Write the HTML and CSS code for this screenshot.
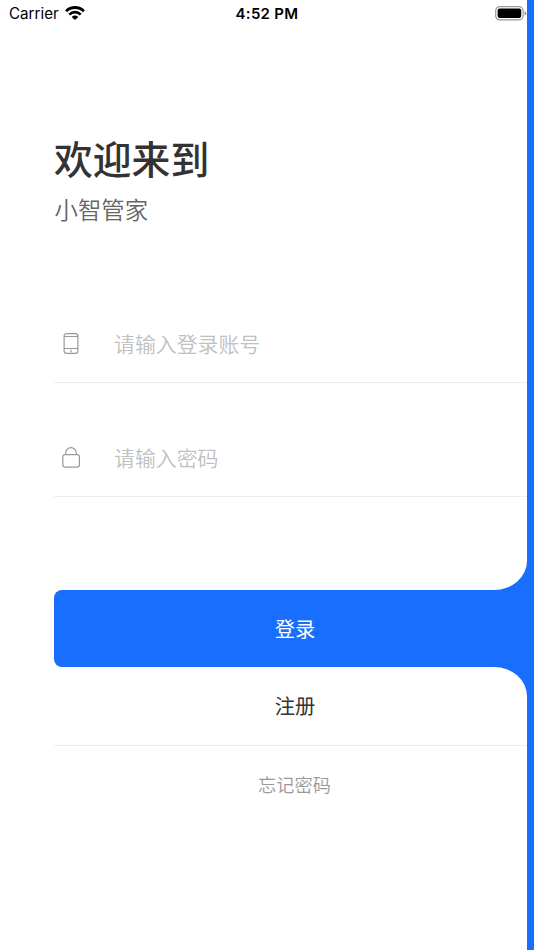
FILE: index.html
```html
<!DOCTYPE html>
<html lang="zh-CN">
<head>
  <meta charset="UTF-8" />
  <meta name="viewport" content="width=device-width, initial-scale=1.0"/>
  <title>登录</title>
  <link rel="stylesheet" href="styles.css">
</head>
<body>
  <form class="page" id="loginForm">
    <section class="panel panel-top">
      <div class="status-bar">
        <div class="carrier">
          <span class="carrier-name">Carrier</span>
          <svg class="wifi" width="20" height="14" viewBox="0 0 20 14">
            <path d="M1.1 5.2a12.6 12.6 0 0 1 17.8 0" fill="none" stroke="#000" stroke-width="2.9"/>
            <path d="M4.3 8.6a8 8 0 0 1 11.4 0" fill="none" stroke="#000" stroke-width="2.7"/>
            <path d="M10 14 6.7 10.9a4.6 4.6 0 0 1 6.6 0z" fill="#000"/>
          </svg>
        </div>
        <span class="time">4:52 PM</span>
        <svg class="battery" width="32" height="15" viewBox="0 0 32 15">
          <rect x="0.7" y="0.7" width="27.4" height="13.2" rx="4" fill="none" stroke="#999" stroke-width="1.2"/>
          <rect x="2.6" y="2.6" width="23.6" height="9.4" rx="2" fill="#000"/>
          <path d="M29.6 5.2q1.7 .8 1.7 2.2t-1.7 2.2z" fill="#888"/>
        </svg>
      </div>

      <h1 class="title">欢迎来到</h1>
      <p class="subtitle">小智管家</p>

      <label class="field">
        <svg class="field-icon" width="34" height="24" viewBox="0 0 34 24">
          <g fill="none" stroke="#999" stroke-width="1.2">
            <rect x="10.1" y="1.6" width="13.8" height="19.8" rx="2.4"/>
            <path d="M10 4.5h14M10 16.5h14M17 17.8v2.4"/>
          </g>
        </svg>
        <input type="text" placeholder="请输入登录账号">
      </label>

      <label class="field">
        <svg class="field-icon" width="34" height="24" viewBox="0 0 34 24">
          <g fill="none" stroke="#999" stroke-width="1.2">
            <rect x="8.8" y="8.6" width="16.6" height="12.6" rx="2.4"/>
            <path d="M11.7 8.6V7a5.3 5.3 0 0 1 10.6 0v1.6"/>
          </g>
        </svg>
        <input type="password" placeholder="请输入密码">
      </label>
    </section>

    <div class="login-row">
      <button type="submit" class="login-btn">登录</button>
    </div>

    <section class="panel panel-bottom">
      <button type="button" class="register-btn">注册</button>
      <button type="button" class="forgot-btn">忘记密码</button>
    </section>
  </form>
</body>
</html>
```
FILE: styles.css
```css
* {
  box-sizing: border-box;
  margin: 0;
  padding: 0;
}

body {
  background: #186eff;
  font-family: Inter, 'Noto Sans CJK SC', sans-serif;
  color: #333;
}

input,
button {
  border: none;
  background: none;
  font-family: inherit;
}

.page {
  display: flex;
  flex-direction: column;
  height: 950px;
}

.panel {
  width: 527px;
  background: #fff;
  padding-left: 54px;
}

.panel-top {
  height: 590px;
  border-bottom-right-radius: 33px 29px;
}

.status-bar {
  display: grid;
  grid-template-columns: 1fr auto 1fr;
  align-items: center;
  width: 534px;
  height: 27px;
  margin-left: -54px;
  padding: 0 7px 0 9px;
  color: #000;
}

.carrier {
  display: flex;
  align-items: center;
  gap: 6px;
}

.carrier-name {
  font-size: 15.2px;
}

.wifi {
  margin-top: -1px;
}

.time {
  margin-left: -2px;
  font-size: 15px;
  font-weight: 600;
  letter-spacing: 0.3px;
}

.battery {
  justify-self: end;
  margin-top: -1px;
}

.title {
  margin-top: 104px;
  font-size: 38.8px;
  font-weight: 500;
  line-height: 58px;
}

.subtitle {
  margin-top: 4px;
  padding-left: 0.5px;
  font-size: 23.4px;
  font-weight: 350;
  line-height: 36px;
  color: #666;
}

.field {
  display: flex;
  align-items: center;
  height: 78px;
  margin-top: 36px;
  border-bottom: 1px solid #eee;
}

.subtitle + .field {
  margin-top: 76px;
}

.field-icon {
  margin-right: 26px;
}

.field input {
  flex: 1;
  min-width: 0;
  height: 42px;
  padding-top: 2px;
  font-size: 20.9px;
  font-weight: 350;
  color: #333;
  outline: none;
}

.field input::placeholder {
  color: #c0c0c0;
}

.login-row {
  width: 100px;
  height: 77px;
  padding-left: 54px;
  background: #fff;
}

.login-btn {
  width: 480px;
  height: 77px;
  padding: 0 0 2px 2px;
  border-radius: 8px 0 0 8px;
  background: #186eff;
  font-size: 20.3px;
  color: #fff;
}

.panel-bottom {
  display: flex;
  flex-direction: column;
  flex: 1;
  border-top-right-radius: 33px 29px;
}

.register-btn {
  height: 78.5px;
  padding: 0 0 2px 9px;
  border-bottom: 1px solid #eee;
  font-size: 20.3px;
  color: #333;
}

.forgot-btn {
  height: 78px;
  padding: 0 0 2px 8px;
  font-size: 18.2px;
  font-weight: 350;
  color: #999;
}
```
